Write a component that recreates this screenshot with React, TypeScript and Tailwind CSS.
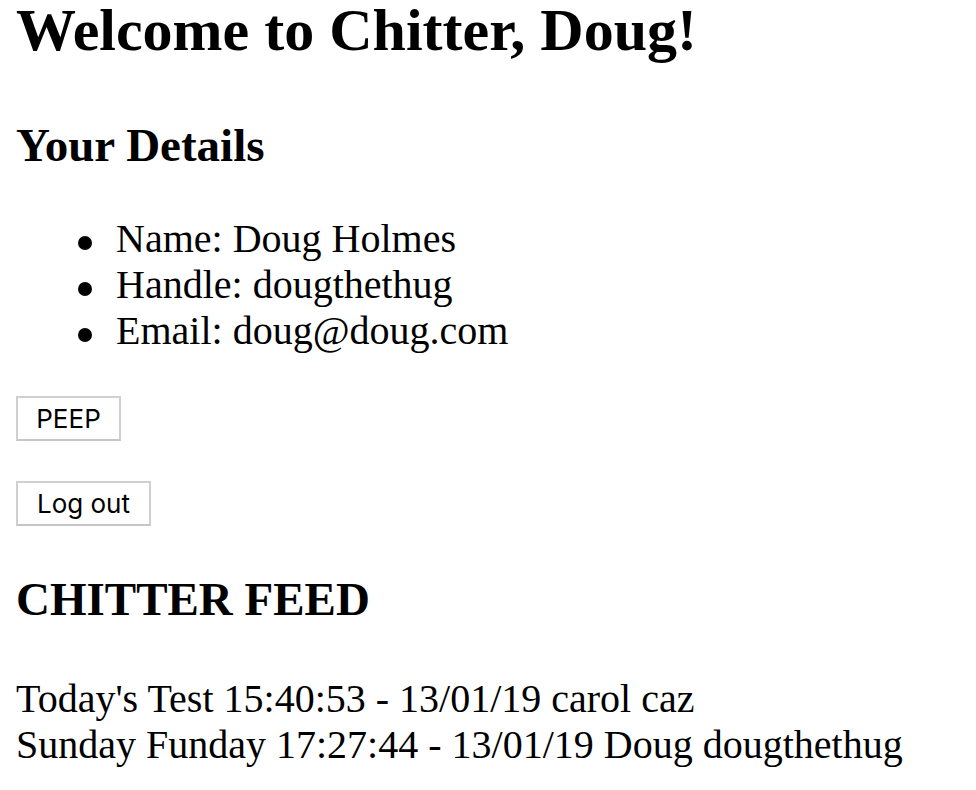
export default function App() {
    const details = [
        { label: 'Name', value: 'Doug Holmes' },
        { label: 'Handle', value: 'dougthethug' },
        { label: 'Email', value: 'doug@doug.com' },
    ]
    const peeps = [
        'Today\'s Test 15:40:53 - 13/01/19 carol caz',
        'Sunday Funday 17:27:44 - 13/01/19 Doug dougthethug',
    ]

    return (
        <div className="min-h-screen bg-white px-4 pb-8 text-black font-['Liberation_Serif','Times_New_Roman',serif]">
            <h1 className="text-[60px] leading-[60px] font-bold">Welcome to Chitter, Doug!</h1>

            <h2 className="mt-[62px] text-[47px] leading-[46px] font-bold">Your Details</h2>
            <ul className="mt-[48px] pl-[62px] text-[40px] leading-[46px]">
                {details.map(d => (
                    <li key={d.label} className="flex items-start">
                        <span className="mt-[20px] mr-[24px] size-[14px] shrink-0 rounded-full bg-black" />
                        <span>
                            {d.label}: {d.value}
                        </span>
                    </li>
                ))}
            </ul>

            <div className="mt-[42px] flex flex-col items-start gap-[40px]">
                <button className="h-[45px] w-[105px] border-2 border-[#d0d0d0] border-b-[#c6c6c6] bg-white text-[26px] font-['Inter','Liberation_Sans',sans-serif]">
                    PEEP
                </button>
                <button className="h-[45px] w-[135px] border-2 border-[#d0d0d0] border-b-[#c6c6c6] bg-white text-[26px] font-['Inter','Liberation_Sans',sans-serif]">
                    Log out
                </button>
            </div>

            <h2 className="mt-[50px] text-[47px] leading-[46px] font-bold">CHITTER FEED</h2>
            <div className="mt-[54px] text-[40px] leading-[46px]">
                {peeps.map(p => (
                    <div key={p}>{p}</div>
                ))}
            </div>
        </div>
    )
}
